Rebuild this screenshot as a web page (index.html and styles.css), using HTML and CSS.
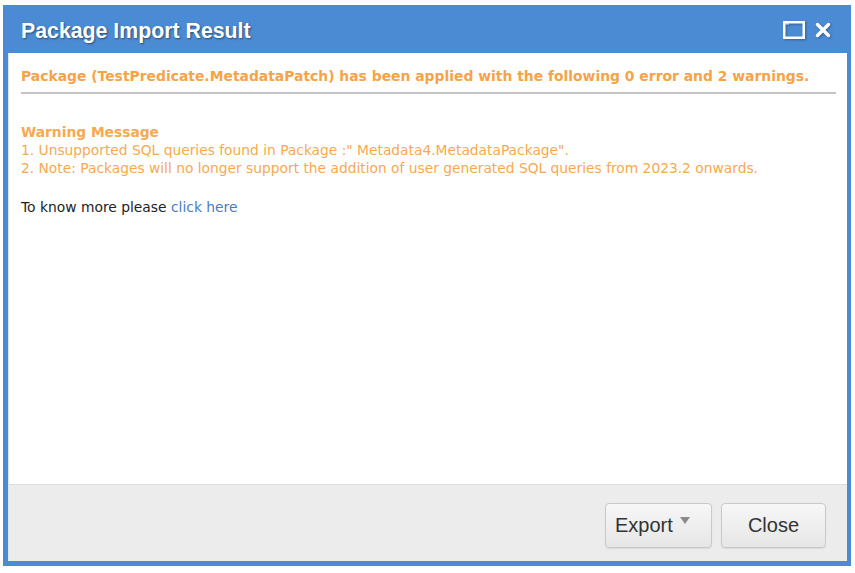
FILE: index.html
```html
<!DOCTYPE html>
<html>
<head>
<meta charset="utf-8">
<link rel="stylesheet" href="styles.css">
</head>
<body>
<div class="dialog">
  <div class="titlebar">
    <div class="title">Package Import Result</div>
    <div class="tools">
      <svg class="ico-max" width="22" height="18" viewBox="0 0 22 18">
        <rect x="1.25" y="1.25" width="19.5" height="15.5" fill="none" stroke="#fff" stroke-width="2.5"/>
        <rect x="2" y="2" width="4" height="1.5" fill="#cfe0f5"/>
      </svg>
      <svg class="ico-close" width="16" height="16" viewBox="0 0 16 16">
        <path d="M2.5 2.5 L13.5 13.5 M13.5 2.5 L2.5 13.5" stroke="#fff" stroke-width="3.4" stroke-linecap="round"/>
      </svg>
    </div>
  </div>
  <div class="body">
    <div class="content">
      <div class="summary">Package (TestPredicate.MetadataPatch) has been applied with the following 0 error and 2 warnings.</div>
      <div class="rule"></div>
      <div class="warn">
        <div class="warn-title">Warning Message</div>
        <div class="warn-line">1. Unsupported SQL queries found in Package :" Metadata4.MetadataPackage".</div>
        <div class="warn-line">2. Note: Packages will no longer support the addition of user generated SQL queries from 2023.2 onwards.</div>
      </div>
      <div class="more">To know more please <a class="link" href="#">click here</a></div>
    </div>
    <div class="footer">
      <button class="btn btn-export">Export <span class="caret"></span></button>
      <button class="btn btn-close">Close</button>
    </div>
  </div>
</div>
</body>
</html>
```

FILE: styles.css
```css
html, body {
  margin: 0;
  padding: 0;
  background: #ffffff;
}
body {
  padding: 5px 0 0 3px;
}
.dialog {
  width: 848px;
  height: 561px;
  box-sizing: border-box;
  background: #4b8bd3;
  padding: 0 4px 5px 5px;
  display: flex;
  flex-direction: column;
}
.titlebar {
  height: 48px;
  flex: none;
  display: flex;
  align-items: center;
  justify-content: space-between;
  padding: 0 16px 0 13px;
}
.title {
  font-family: "Liberation Sans", Arial, sans-serif;
  font-weight: bold;
  font-size: 21.3px;
  color: #ffffff;
  text-shadow: 1px 1px 2px rgba(0, 0, 0, 0.45);
  padding-top: 4px;
}
.tools {
  display: flex;
  align-items: center;
  gap: 10px;
  padding-top: 2px;
}
.ico-max, .ico-close {
  display: block;
  filter: drop-shadow(1px 1px 1px rgba(0,0,0,0.3));
}
.body {
  flex: 1;
  display: flex;
  flex-direction: column;
  background: #ffffff;
  border-left: 1px solid #dbe6f3;
}
.content {
  flex: 1;
  padding: 14px 11px 0 12px;
  font-family: "DejaVu Sans", Verdana, sans-serif;
  font-size: 13.85px;
}
.summary {
  color: #f6a347;
  font-weight: bold;
  font-size: 13.9px;
  line-height: 18px;
}
.rule {
  height: 2px;
  background: #c4c4c4;
  margin: 7px 0 0 0;
}
.warn {
  margin-top: 29px;
  color: #f7a94f;
  line-height: 18px;
}
.warn-title {
  font-weight: bold;
  font-size: 13.8px;
}
.warn-line {
  font-size: 13.8px;
}
.more {
  margin-top: 21px;
  color: #222222;
  line-height: 18px;
}
.link {
  color: #4a7cc0;
  text-decoration: none;
}
.footer {
  height: 76px;
  flex: none;
  background: #ececec;
  border-top: 1px solid #dddddd;
  display: flex;
  align-items: center;
  justify-content: flex-end;
  gap: 9px;
  padding: 0 21px 0 0;
}
.btn {
  height: 45px;
  font-family: "Liberation Sans", Arial, sans-serif;
  font-size: 20px;
  color: #333333;
  background: linear-gradient(#f7f7f7, #e6e6e6);
  border: 1px solid #c9c9c9;
  border-radius: 4px;
  box-shadow: 0 1px 1px rgba(0,0,0,0.08);
  display: flex;
  align-items: center;
  justify-content: center;
  padding: 0;
  margin-top: 4px;
}
.btn-export {
  width: 107px;
  justify-content: flex-start;
  padding-left: 9px;
}
.btn-close {
  width: 105px;
}
.caret {
  display: inline-block;
  width: 0;
  height: 0;
  border-left: 5px solid transparent;
  border-right: 5px solid transparent;
  border-top: 7px solid #8a8a8a;
  margin: 0 0 10px 7px;
}
```
